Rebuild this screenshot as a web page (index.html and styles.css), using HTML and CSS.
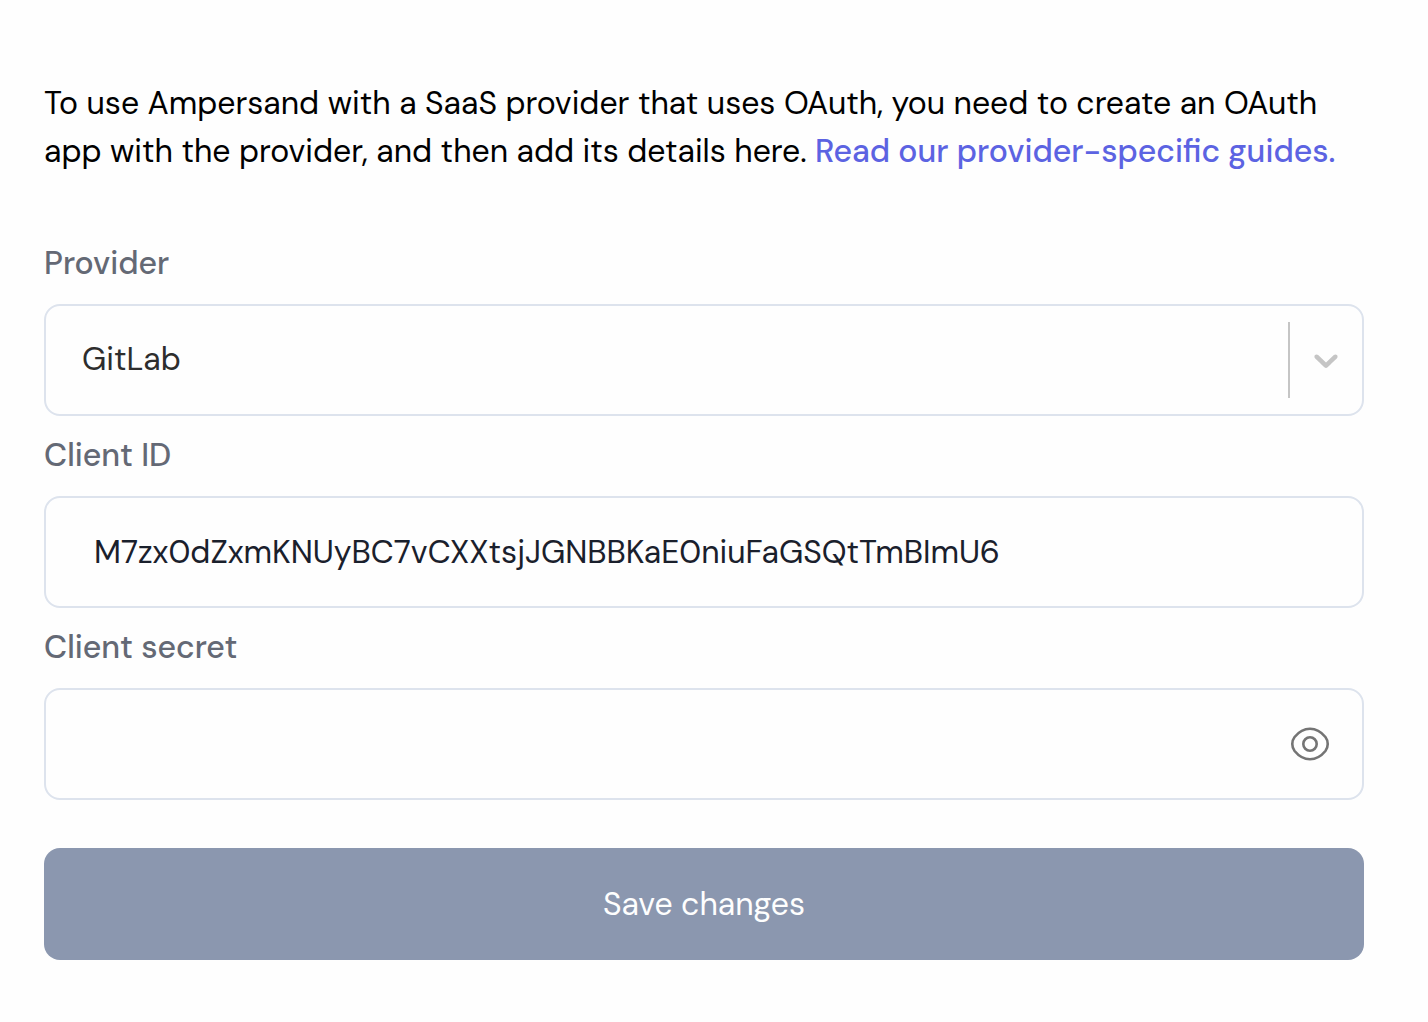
FILE: index.html
```html
<!DOCTYPE html>
<html lang="en">
<head>
<meta charset="utf-8">
<title>Provider app</title>
<link rel="stylesheet" href="styles.css">
</head>
<body>
<main class="form">
  <p class="intro">To use Ampersand with a SaaS provider that uses OAuth, you need to create an OAuth<br>app with the provider, and then add its details here. <a class="guide-link">Read our provider-specific guides.</a></p>
  <div class="field">
    <div class="label">Provider</div>
    <div class="control select">
      <span class="select-value">GitLab</span>
      <span class="separator"></span>
      <svg class="chevron" viewBox="0 0 20 20"><path d="M4.516 7.548c0.436-0.446 1.043-0.481 1.576 0l3.908 3.747 3.908-3.747c0.533-0.481 1.141-0.446 1.574 0 0.436 0.445 0.408 1.197 0 1.615-0.406 0.418-4.695 4.502-4.695 4.502-0.217 0.223-0.502 0.335-0.787 0.335s-0.57-0.112-0.789-0.335c0 0-4.287-4.084-4.695-4.502s-0.436-1.17 0-1.615z"/></svg>
    </div>
  </div>
  <div class="field">
    <div class="label">Client ID</div>
    <div class="control text"><span class="text-value">M7zx0dZxmKNUyBC7vCXXtsjJGNBBKaE0niuFaGSQtTmBImU6</span></div>
  </div>
  <div class="field">
    <div class="label">Client secret</div>
    <div class="control secret">
      <svg class="eye" viewBox="0 0 40 40"><path d="M20 4.800C13.500 4.800 8.500 8.200 4.600 13C1.500 17 1.500 23 4.600 27C8.500 31.800 13.500 35.200 20 35.200C26.500 35.200 31.500 31.800 35.400 27C38.500 23 38.500 17 35.400 13C31.500 8.200 26.500 4.800 20 4.800Z"/><circle cx="20" cy="20" r="6.700"/></svg>
    </div>
  </div>
  <button class="save">Save changes</button>
</main>
</body>
</html>
```
FILE: styles.css
```css
* { box-sizing: border-box; }
body {
  margin: 0;
  background: #fefefe;
  font-family: "DM Sans", Inter, "Liberation Sans", sans-serif;
  font-size: 32px;
  line-height: 48px;
  letter-spacing: -0.012px;
  font-variant-ligatures: common-ligatures;
  color: #000;
}
.form {
  display: flex;
  flex-direction: column;
  width: 1408px;
  padding: 79px 44px 0;
}
.intro { margin: 0 0 65px; white-space: nowrap; }
.guide-link { color: #5c63e2; font-weight: 500; letter-spacing: 0; }
.field { display: flex; flex-direction: column; margin-bottom: 16px; }
.label { height: 48px; line-height: 46px; color: #646975; font-weight: 500; }
.control {
  display: flex;
  align-items: center;
  height: 112px;
  margin-top: 16px;
  border: 2px solid #dde3ed;
  border-radius: 16px;
  background: #fefefe;
}
.select { padding: 0 16px 0 36px; }
.select-value { flex: 1; padding-bottom: 2px; color: #2d2d2d; }
.separator { width: 2px; height: 76px; margin-right: 16px; background: #c5c5c5; }
.chevron { width: 40px; height: 40px; fill: #c5c5c5; }
.text { padding-left: 48px; color: #1a202c; }
.secret { justify-content: flex-end; padding-right: 32px; }
.eye { width: 40px; height: 40px; fill: none; stroke: #747474; stroke-width: 2.600; }
.save {
  height: 112px;
  margin-top: 32px;
  border: 0;
  border-radius: 16px;
  background: #8b97af;
  color: #fefefe;
  font: inherit;
}
```
